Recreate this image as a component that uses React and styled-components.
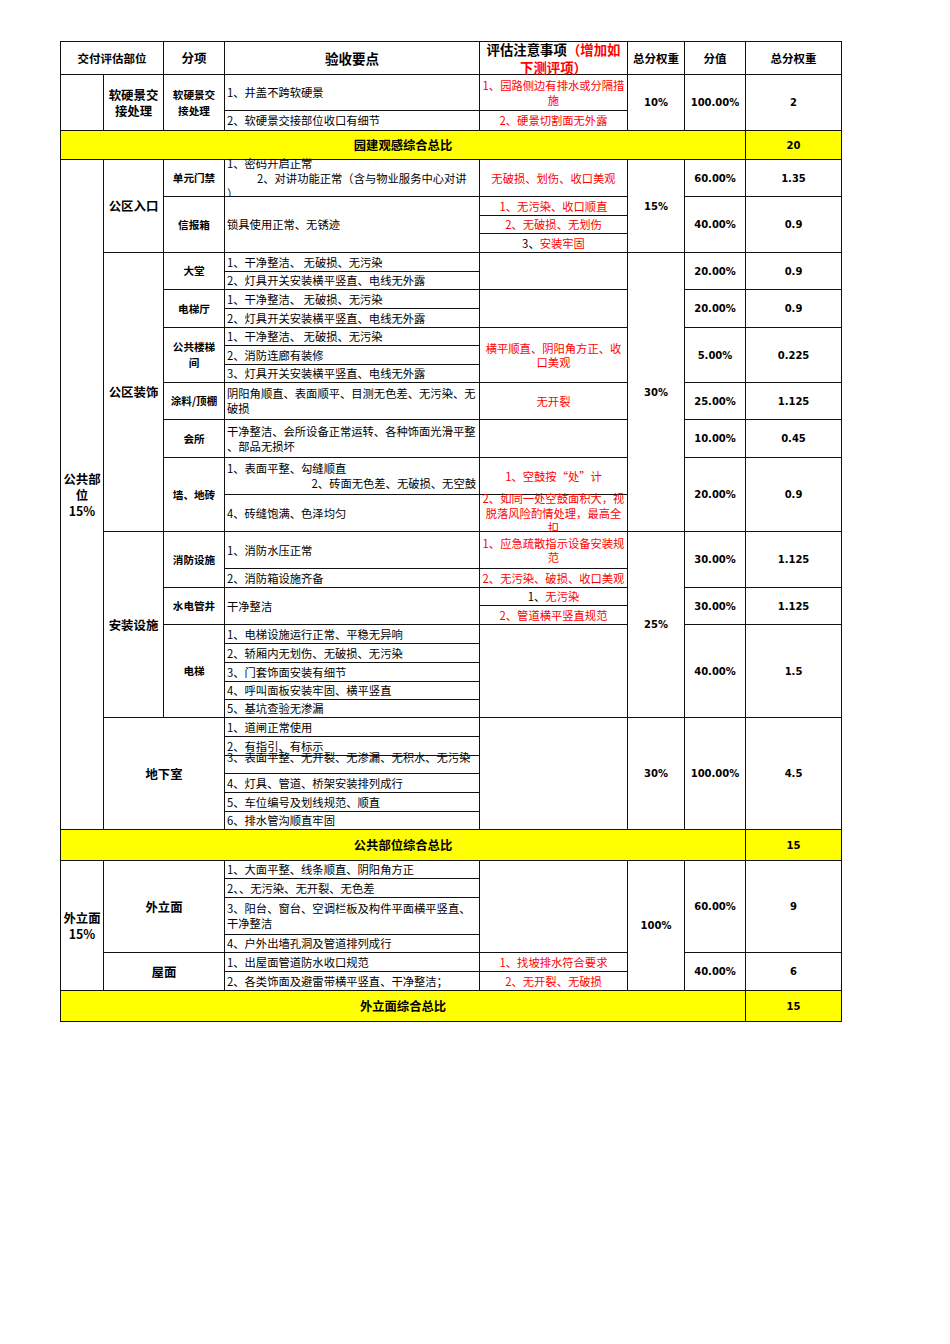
import styled, { createGlobalStyle } from "styled-components";

const GlobalStyle = createGlobalStyle`
  body {
    margin: 0;
    background: #fff;
    font-family: "Noto Sans CJK SC", sans-serif;
    color: #000;
  }
`;

// y of every horizontal grid line in the sheet
const ROWS = [
  41, 74, 110, 130, 159, 196, 215, 233, 252, 271, 289, 308, 327, 345, 364, 382,
  419, 457, 494, 531, 568, 587, 605, 624, 643, 662, 681, 699, 717, 736, 755, 773,
  792, 811, 829, 860, 878, 897, 934, 952, 971, 990, 1021,
];

const rows = (a, b) => `${ROWS.indexOf(a) + 1} / ${ROWS.indexOf(b) + 1}`;

const Page = styled.div`
  min-height: 100vh;
  box-sizing: border-box;
  padding: 41px 0 0 60px;
`;

const Sheet = styled.div`
  display: grid;
  width: max-content;
  grid-template-columns: 42px 59px 60px 254px 147px 56px 60px 95px;
  grid-template-rows: ${ROWS.slice(1)
    .map((y, i) => `${y - ROWS[i] - 1}px`)
    .join(" ")};
  gap: 1px;
  padding: 1px;
  background: #111;
`;

const Cell = styled.div`
  grid-row: ${(p) => p.$r};
  grid-column: ${(p) => p.$c};
  min-height: 0;
  display: flex;
  align-items: center;
  background: #fff;
  white-space: nowrap;
  box-sizing: border-box;
`;

const Head = styled(Cell)`
  text-align: center;
  font-weight: 700;
  font-size: ${(p) => p.$size || 11.5}px;
  line-height: 18px;
`;

const Label = styled(Cell)`
  text-align: center;
  font-weight: 700;
  font-size: 12.4px;
  line-height: 16px;
`;

const Sub = styled(Cell)`
  text-align: center;
  font-weight: 700;
  font-size: 10.6px;
  line-height: 16px;
`;

const Point = styled(Cell)`
  text-align: left;
  padding-left: 2px;
  font-size: 11.3px;
  line-height: 15px;
`;

const Note = styled(Cell)`
  text-align: center;
  color: #f00;
  font-size: 11.3px;
  line-height: 14.5px;
`;

const Num = styled(Cell)`
  text-align: center;
  font-family: "DejaVu Sans", "Noto Sans CJK SC", sans-serif;
  font-weight: 700;
  font-size: 10px;
`;

const Banner = styled(Cell)`
  background: #ffff00;
  text-align: center;
  font-weight: 700;
  font-size: ${(p) => (p.$num ? 10 : 12.3)}px;
  font-family: ${(p) =>
    p.$num ? `"DejaVu Sans", "Noto Sans CJK SC", sans-serif` : "inherit"};
`;

const Inner = styled.div`
  width: 100%;
  transform: ${(p) => (p.$up ? `translateY(-${p.$up}px)` : "none")};
`;

const Ln = styled.div`
  text-align: ${(p) => (p.$right ? "right" : "inherit")};
  padding-left: ${(p) => p.$indent || 0}px;
  padding-right: ${(p) => (p.$right ? 3 : 0)}px;
`;

const Red = styled.span`
  color: #f00;
`;

const Black = styled.span`
  color: #000;
`;

const C = ({ kind: Kind, y, x, up, children, ...rest }) => (
  <Kind $r={rows(y[0], y[1])} $c={x} {...rest}>
    <Inner $up={up}>{children}</Inner>
  </Kind>
);

const COL = {
  part: "1 / 2",
  group: "2 / 3",
  item: "3 / 4",
  point: "4 / 5",
  note: "5 / 6",
  weight: "6 / 7",
  value: "7 / 8",
  total: "8 / 9",
};

const Points = ({ y, items }) =>
  items.map((text, i) => (
    <C key={i} kind={Point} y={[y[i], y[i + 1]]} x={COL.point}>
      {text}
    </C>
  ));

const Scores = ({ y, value, total }) => (
  <>
    <C kind={Num} y={y} x={COL.value}>{value}</C>
    <C kind={Num} y={y} x={COL.total}>{total}</C>
  </>
);

const Summary = ({ y, title, total }) => (
  <>
    <C kind={Banner} y={y} x="1 / 8">{title}</C>
    <C kind={Banner} y={y} x={COL.total} $num>{total}</C>
  </>
);

const CLEAN = "1、干净整洁、 无破损、无污染";
const LAMP = "2、灯具开关安装横平竖直、电线无外露";

const App = () => (
  <Page>
    <GlobalStyle />
    <Sheet>
      {/* header */}
      <C kind={Head} y={[41, 74]} x="1 / 3">交付评估部位</C>
      <C kind={Head} y={[41, 74]} x={COL.item} $size={12.5}>分项</C>
      <C kind={Head} y={[41, 74]} x={COL.point} $size={13.5}>验收要点</C>
      <C kind={Head} y={[41, 74]} x={COL.note} $size={13.4}>
        评估注意事项<Red>（增加如</Red>
        <br />
        <Red>下测评项）</Red>
      </C>
      <C kind={Head} y={[41, 74]} x={COL.weight}>总分权重</C>
      <C kind={Head} y={[41, 74]} x={COL.value}>分值</C>
      <C kind={Head} y={[41, 74]} x={COL.total}>总分权重</C>

      {/* 软硬景 */}
      <C kind={Label} y={[74, 130]} x={COL.part} />
      <C kind={Label} y={[74, 130]} x={COL.group}>
        软硬景交<br />接处理
      </C>
      <C kind={Sub} y={[74, 130]} x={COL.item}>
        软硬景交<br />接处理
      </C>
      <Points y={[74, 110, 130]} items={["1、井盖不跨软硬景", "2、软硬景交接部位收口有细节"]} />
      <C kind={Note} y={[74, 110]} x={COL.note}>
        1、园路侧边有排水或分隔措<br />施
      </C>
      <C kind={Note} y={[110, 130]} x={COL.note}>2、硬景切割面无外露</C>
      <C kind={Num} y={[74, 130]} x={COL.weight}>10%</C>
      <Scores y={[74, 130]} value="100.00%" total="2" />
      <Summary y={[130, 159]} title="园建观感综合总比" total="20" />

      {/* 公共部位 */}
      <C kind={Label} y={[159, 829]} x={COL.part}>
        公共部<br />位<br />15%
      </C>

      <C kind={Label} y={[159, 252]} x={COL.group}>公区入口</C>
      <C kind={Sub} y={[159, 196]} x={COL.item}>单元门禁</C>
      <C kind={Point} y={[159, 196]} x={COL.point}>
        <Ln>1、密码开启正常</Ln>
        <Ln $indent={30}>2、对讲功能正常（含与物业服务中心对讲</Ln>
        <Ln>）</Ln>
      </C>
      <C kind={Note} y={[159, 196]} x={COL.note}>无破损、划伤、收口美观</C>
      <C kind={Num} y={[159, 252]} x={COL.weight}>15%</C>
      <Scores y={[159, 196]} value="60.00%" total="1.35" />
      <C kind={Sub} y={[196, 252]} x={COL.item}>信报箱</C>
      <C kind={Point} y={[196, 252]} x={COL.point}>锁具使用正常、无锈迹</C>
      <C kind={Note} y={[196, 215]} x={COL.note}>1、无污染、收口顺直</C>
      <C kind={Note} y={[215, 233]} x={COL.note}>2、无破损、无划伤</C>
      <C kind={Note} y={[233, 252]} x={COL.note}>
        <Black>3、</Black>安装牢固
      </C>
      <Scores y={[196, 252]} value="40.00%" total="0.9" />

      <C kind={Label} y={[252, 531]} x={COL.group}>公区装饰</C>
      <C kind={Num} y={[252, 531]} x={COL.weight}>30%</C>

      <C kind={Sub} y={[252, 289]} x={COL.item}>大堂</C>
      <Points y={[252, 271, 289]} items={[CLEAN, LAMP]} />
      <C kind={Note} y={[252, 289]} x={COL.note} />
      <Scores y={[252, 289]} value="20.00%" total="0.9" />

      <C kind={Sub} y={[289, 327]} x={COL.item}>电梯厅</C>
      <Points y={[289, 308, 327]} items={[CLEAN, LAMP]} />
      <C kind={Note} y={[289, 327]} x={COL.note} />
      <Scores y={[289, 327]} value="20.00%" total="0.9" />

      <C kind={Sub} y={[327, 382]} x={COL.item}>
        公共楼梯<br />间
      </C>
      <Points
        y={[327, 345, 364, 382]}
        items={[CLEAN, "2、消防连廊有装修", "3、灯具开关安装横平竖直、电线无外露"]}
      />
      <C kind={Note} y={[327, 382]} x={COL.note}>
        横平顺直、阴阳角方正、收<br />口美观
      </C>
      <Scores y={[327, 382]} value="5.00%" total="0.225" />

      <C kind={Sub} y={[382, 419]} x={COL.item}>涂料/顶棚</C>
      <C kind={Point} y={[382, 419]} x={COL.point}>
        阴阳角顺直、表面顺平、目测无色差、无污染、无<br />破损
      </C>
      <C kind={Note} y={[382, 419]} x={COL.note}>无开裂</C>
      <Scores y={[382, 419]} value="25.00%" total="1.125" />

      <C kind={Sub} y={[419, 457]} x={COL.item}>会所</C>
      <C kind={Point} y={[419, 457]} x={COL.point}>
        干净整洁、会所设备正常运转、各种饰面光滑平整<br />、部品无损坏
      </C>
      <C kind={Note} y={[419, 457]} x={COL.note} />
      <Scores y={[419, 457]} value="10.00%" total="0.45" />

      <C kind={Sub} y={[457, 531]} x={COL.item}>墙、地砖</C>
      <C kind={Point} y={[457, 494]} x={COL.point}>
        <Ln>1、表面平整、勾缝顺直</Ln>
        <Ln $right>2、砖面无色差、无破损、无空鼓</Ln>
      </C>
      <C kind={Point} y={[494, 531]} x={COL.point}>4、砖缝饱满、色泽均匀</C>
      <C kind={Note} y={[457, 494]} x={COL.note}>1、空鼓按“处”计</C>
      <C kind={Note} y={[494, 531]} x={COL.note}>
        2、如同一处空鼓面积大，视<br />脱落风险酌情处理，最高全<br />扣
      </C>
      <Scores y={[457, 531]} value="20.00%" total="0.9" />

      <C kind={Label} y={[531, 717]} x={COL.group}>安装设施</C>
      <C kind={Num} y={[531, 717]} x={COL.weight}>25%</C>

      <C kind={Sub} y={[531, 587]} x={COL.item}>消防设施</C>
      <Points y={[531, 568, 587]} items={["1、消防水压正常", "2、消防箱设施齐备"]} />
      <C kind={Note} y={[531, 568]} x={COL.note}>
        1、应急疏散指示设备安装规<br />范
      </C>
      <C kind={Note} y={[568, 587]} x={COL.note}>2、无污染、破损、收口美观</C>
      <Scores y={[531, 587]} value="30.00%" total="1.125" />

      <C kind={Sub} y={[587, 624]} x={COL.item}>水电管井</C>
      <C kind={Point} y={[587, 624]} x={COL.point}>干净整洁</C>
      <C kind={Note} y={[587, 605]} x={COL.note}>
        <Black>1、</Black>无污染
      </C>
      <C kind={Note} y={[605, 624]} x={COL.note}>2、管道横平竖直规范</C>
      <Scores y={[587, 624]} value="30.00%" total="1.125" />

      <C kind={Sub} y={[624, 717]} x={COL.item}>电梯</C>
      <Points
        y={[624, 643, 662, 681, 699, 717]}
        items={[
          "1、电梯设施运行正常、平稳无异响",
          "2、轿厢内无划伤、无破损、无污染",
          "3、门套饰面安装有细节",
          "4、呼叫面板安装牢固、横平竖直",
          "5、基坑查验无渗漏",
        ]}
      />
      <C kind={Note} y={[624, 717]} x={COL.note} />
      <Scores y={[624, 717]} value="40.00%" total="1.5" />

      <C kind={Label} y={[717, 829]} x="2 / 4">地下室</C>
      <C kind={Point} y={[717, 736]} x={COL.point}>1、道闸正常使用</C>
      <C kind={Point} y={[736, 755]} x={COL.point}>2、有指引、有标示</C>
      <C kind={Point} y={[755, 773]} x={COL.point} up={7}>
        3、表面平整、无开裂、无渗漏、无积水、无污染
      </C>
      <Points
        y={[773, 792, 811, 829]}
        items={["4、灯具、管道、桥架安装排列成行", "5、车位编号及划线规范、顺直", "6、排水管沟顺直牢固"]}
      />
      <C kind={Note} y={[717, 829]} x={COL.note} />
      <C kind={Num} y={[717, 829]} x={COL.weight}>30%</C>
      <Scores y={[717, 829]} value="100.00%" total="4.5" />

      <Summary y={[829, 860]} title="公共部位综合总比" total="15" />

      {/* 外立面 */}
      <C kind={Label} y={[860, 990]} x={COL.part}>
        外立面<br />15%
      </C>
      <C kind={Label} y={[860, 952]} x="2 / 4">外立面</C>
      <Points
        y={[860, 878, 897]}
        items={["1、大面平整、线条顺直、阴阳角方正", "2、、无污染、无开裂、无色差"]}
      />
      <C kind={Point} y={[897, 934]} x={COL.point}>
        3、阳台、窗台、空调栏板及构件平面横平竖直、<br />干净整洁
      </C>
      <C kind={Point} y={[934, 952]} x={COL.point}>4、户外出墙孔洞及管道排列成行</C>
      <C kind={Note} y={[860, 952]} x={COL.note} />
      <C kind={Num} y={[860, 990]} x={COL.weight}>100%</C>
      <Scores y={[860, 952]} value="60.00%" total="9" />

      <C kind={Label} y={[952, 990]} x="2 / 4">屋面</C>
      <Points
        y={[952, 971, 990]}
        items={["1、出屋面管道防水收口规范", "2、各类饰面及避雷带横平竖直、干净整洁；"]}
      />
      <C kind={Note} y={[952, 971]} x={COL.note}>1、找坡排水符合要求</C>
      <C kind={Note} y={[971, 990]} x={COL.note}>2、无开裂、无破损</C>
      <Scores y={[952, 990]} value="40.00%" total="6" />

      <Summary y={[990, 1021]} title="外立面综合总比" total="15" />
    </Sheet>
  </Page>
);

export default App;
